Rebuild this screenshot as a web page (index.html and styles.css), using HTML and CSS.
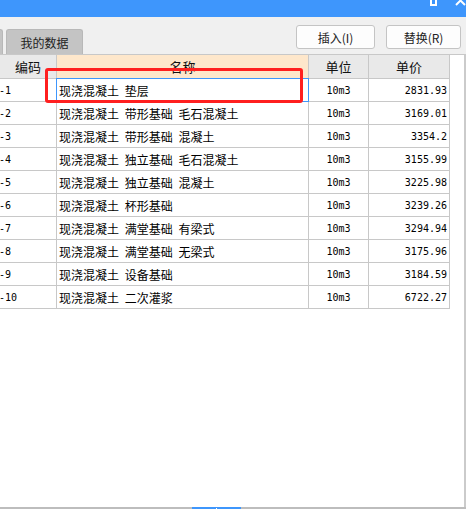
FILE: index.html
```html
<!DOCTYPE html>
<html lang="zh">
<head>
<meta charset="utf-8">
<link rel="stylesheet" href="styles.css">
</head>
<body>
<div class="window">
  <div class="titlebar">
    <span class="tb-max"></span>
    <svg class="tb-close" width="11" height="7" viewBox="0 0 11 7"><path d="M1 -4 L10 5 M10 -4 L1 5" stroke="#fff" stroke-width="2"/></svg>
  </div>
  <div class="toolbar">
    <div class="tabs">
      <div class="tab tab-stub"></div>
      <div class="tab">我的数据</div>
    </div>
    <div class="buttons">
      <button class="btn btn-insert">插入(I)</button>
      <button class="btn btn-replace">替换(R)</button>
    </div>
  </div>
  <div class="grid-area">
    <div class="grid">
      <div class="hd">编码</div><div class="hd hd-sel">名称</div><div class="hd">单位</div><div class="hd">单价</div>

      <div class="c code">-1</div><div class="c name selected">现浇混凝土 垫层</div><div class="c unit">10m3</div><div class="c price">2831.93</div>
      <div class="c code">-2</div><div class="c name">现浇混凝土 带形基础 毛石混凝土</div><div class="c unit">10m3</div><div class="c price">3169.01</div>
      <div class="c code">-3</div><div class="c name">现浇混凝土 带形基础 混凝土</div><div class="c unit">10m3</div><div class="c price">3354.2</div>
      <div class="c code">-4</div><div class="c name">现浇混凝土 独立基础 毛石混凝土</div><div class="c unit">10m3</div><div class="c price">3155.99</div>
      <div class="c code">-5</div><div class="c name">现浇混凝土 独立基础 混凝土</div><div class="c unit">10m3</div><div class="c price">3225.98</div>
      <div class="c code">-6</div><div class="c name">现浇混凝土 杯形基础</div><div class="c unit">10m3</div><div class="c price">3239.26</div>
      <div class="c code">-7</div><div class="c name">现浇混凝土 满堂基础 有梁式</div><div class="c unit">10m3</div><div class="c price">3294.94</div>
      <div class="c code">-8</div><div class="c name">现浇混凝土 满堂基础 无梁式</div><div class="c unit">10m3</div><div class="c price">3175.96</div>
      <div class="c code">-9</div><div class="c name">现浇混凝土 设备基础</div><div class="c unit">10m3</div><div class="c price">3184.59</div>
      <div class="c code">-10</div><div class="c name">现浇混凝土 二次灌浆</div><div class="c unit">10m3</div><div class="c price">6722.27</div>
    </div>
    <div class="annot"></div>
  </div>
  <div class="hscroll"><div class="thumb"></div></div>
</div>
</body>
</html>
```
FILE: styles.css
```css
* { box-sizing: border-box; }
html, body { margin: 0; padding: 0; }
body {
  width: 466px;
  height: 509px;
  overflow: hidden;
  background: #f0f0f0;
  font-family: "Noto Sans CJK SC", "Noto Sans", sans-serif;
  font-size: 12px;
  color: #000;
}
.window { display: flex; flex-direction: column; height: 509px; }

.titlebar {
  position: relative;
  height: 17px;
  background: #3e96fc;
  flex: none;
}
.tb-max {
  position: absolute;
  left: 430px; top: -4px;
  width: 7px; height: 10px;
  border: 2px solid #fff;
}
.tb-close { position: absolute; left: 455px; top: 0; }

.toolbar {
  height: 37px;
  flex: none;
  display: flex;
  justify-content: space-between;
  align-items: flex-start;
}
.tabs {
  display: flex;
  align-items: flex-end;
  gap: 3px;
  height: 37px;
  padding-top: 12px;
}
.tab {
  height: 25px;
  width: 77px;
  background: #c4c4c4;
  border: 1px solid #b8b8b8;
  border-bottom: none;
  border-radius: 3px 3px 0 0;
  display: flex;
  align-items: center;
  justify-content: center;
  font-size: 12px;
  color: #222;
}
.tab-stub { width: 3px; border-left: none; border-radius: 0 3px 0 0; }

.buttons {
  display: flex;
  gap: 11px;
  padding-top: 8px;
  padding-right: 5px;
}
.btn {
  height: 24px;
  background: #fdfdfd;
  border: 1px solid #c4c4c4;
  border-radius: 3px;
  font-family: "Noto Sans CJK SC", "Noto Sans", sans-serif;
  font-size: 12px;
  color: #222;
  padding: 0;
}
.btn-insert { width: 79px; }
.btn-replace { width: 75px; }

.grid-area {
  position: relative;
  flex: 1;
  background: #fff;
  border-top: 1px solid #c8c8c8;
  border-right: 2px solid #cbcbcb;
  width: 466px;
}
.grid {
  display: grid;
  grid-template-columns: 56px 251px 59px 80px;
  grid-auto-rows: 22px;
  grid-template-rows: 23px;
  gap: 1px;
  width: 450px;
  background: #c8c8c8;
  border-right: 1px solid #c8c8c8;
  border-bottom: 1px solid #c8c8c8;
}
.hd {
  background: #e9e9e9;
  display: flex;
  align-items: center;
  justify-content: center;
  font-size: 13px;
  color: #111;
}
.hd-sel { background: #fee7cb; }
.c {
  background: #fff;
  display: flex;
  align-items: center;
  white-space: pre;
  overflow: hidden;
}
.code {
  font-family: "DejaVu Sans Mono", monospace;
  font-size: 10px;
  padding-left: 0;
  margin-left: -1px;
}
.name { padding-left: 2px; font-size: 12px; word-spacing: 3px; }
.unit {
  justify-content: center;
  font-family: "DejaVu Sans Mono", monospace;
  font-size: 10px;
}
.price {
  justify-content: flex-end;
  padding-right: 2px;
  font-family: "DejaVu Sans Mono", monospace;
  font-size: 10px;
}
.selected { outline: 1px solid #3e96fc; position: relative; z-index: 1; }

.annot {
  position: absolute;
  left: 45px;
  top: 13px;
  width: 258px;
  height: 35px;
  border: 3px solid #ff1f1f;
  border-radius: 3px;
  z-index: 2;
}

.hscroll {
  flex: none;
  height: 2px;
  background: #bdbdbd;
  position: relative;
}
.thumb {
  position: absolute;
  left: 192px;
  width: 49px;
  height: 2px;
  background: #3e96fc;
}
.thumb::after {
  content: "";
  position: absolute;
  left: 24px;
  top: 1px;
  width: 1px;
  height: 1px;
  background: #fff;
}
```
